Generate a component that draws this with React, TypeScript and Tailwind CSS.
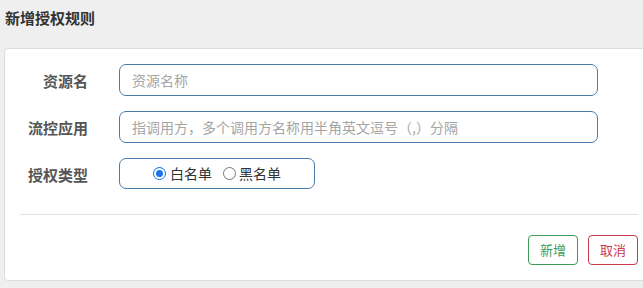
import React from "react";

export default function App() {
  const font = { fontFamily: '"Microsoft YaHei", "Noto Sans CJK SC", "Noto Sans", sans-serif' };
  return (
    <div className="w-[643px] h-[288px] overflow-hidden bg-[#efefef]" style={font}>
      <div className="pl-[5px] pt-[8px] h-[48px] text-[15px] leading-[20px] font-bold text-[#333]">新增授权规则</div>
      <div className="ml-[4px] w-[652px] h-[233px] bg-white border border-[#dcdcdc] rounded-[4px] pt-[15px] px-[15px]">
        <div className="flex flex-col gap-[15px]">
          <div className="flex items-center">
            <div className="w-[68px] text-right text-[15px] font-bold text-[#555] pt-[2px]">资源名</div>
            <input
              className="ml-[31px] w-[479px] h-[32px] border border-[#4a7aa6] rounded-[7px] pl-[12px] text-[14px] text-[#333] placeholder:text-[#a5a5a5] outline-none"
              placeholder="资源名称"
              style={font}
            />
          </div>
          <div className="flex items-center">
            <div className="w-[68px] text-right text-[15px] font-bold text-[#555] pt-[2px]">流控应用</div>
            <input
              className="ml-[31px] w-[479px] h-[32px] border border-[#4a7aa6] rounded-[7px] pl-[12px] text-[14px] text-[#333] placeholder:text-[#a5a5a5] outline-none"
              placeholder="指调用方，多个调用方名称用半角英文逗号（,）分隔"
              style={font}
            />
          </div>
          <div className="flex items-center">
            <div className="w-[68px] text-right text-[15px] font-bold text-[#555] pt-[4px]">授权类型</div>
            <div className="ml-[31px] w-[196px] h-[31px] border border-[#4a7aa6] rounded-[7px] flex items-center justify-center text-[14px] text-[#333]">
              <span className="flex items-center">
                <span className="w-[13px] h-[13px] rounded-full border border-[#1a73e8] bg-[#1a73e8] flex items-center justify-center">
                  <span className="w-[7px] h-[7px] rounded-full bg-[#1a73e8] ring-2 ring-white"></span>
                </span>
                <span className="ml-[4px]">白名单</span>
              </span>
              <span className="flex items-center ml-[11px]">
                <span className="w-[13px] h-[13px] rounded-full border border-[#767676] bg-white"></span>
                <span className="ml-[3px]">黑名单</span>
              </span>
            </div>
          </div>
        </div>
        <div className="mt-[25px] h-px w-[618px] bg-[#e3e3e3]"></div>
        <div className="mt-[20px] flex justify-start pl-[508px] gap-[10px]">
          <button className="w-[50px] h-[30px] border border-[#3c9a55] rounded-[4px] text-[13px] text-[#3c9a55] bg-white" style={font}>新增</button>
          <button className="w-[50px] h-[30px] border border-[#c9394a] rounded-[4px] text-[13px] text-[#c9394a] bg-white" style={font}>取消</button>
        </div>
      </div>
    </div>
  );
}
